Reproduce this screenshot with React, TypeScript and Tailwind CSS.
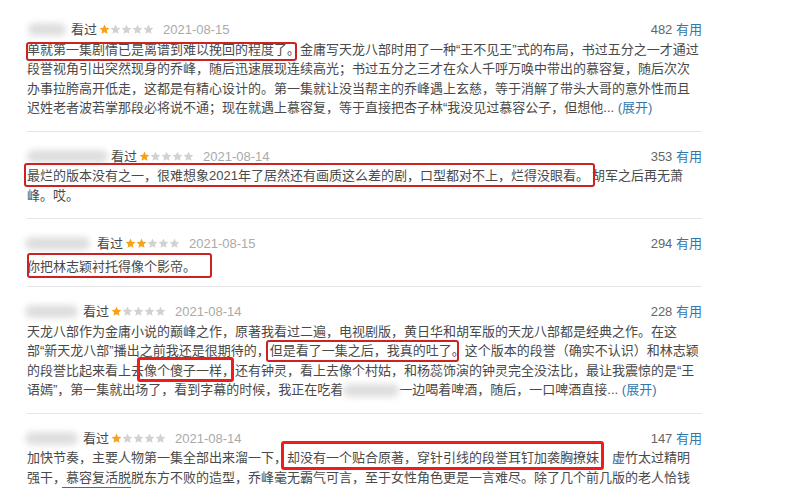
import React from "react"

type Review = {
  name: number
  rating: number
  date: string
  votes: number
  lines: React.ReactNode[]
  first?: boolean
  bodyTop?: string
  bottom?: string
}

function Star({ on }: { on: boolean }) {
  return (
    <svg width="11" height="11" viewBox="0 0 24 24" className="shrink-0">
      <path
        d="M12 1.2l3.2 6.8 7.4.9-5.5 5.1 1.5 7.4L12 17.8l-6.6 3.6 1.5-7.4-5.5-5.1 7.4-.9z"
        fill={on ? "#f5a31e" : "#d2d2d2"}
      />
    </svg>
  )
}

function Stars({ n }: { n: number }) {
  return (
    <span className="flex items-center">
      {[0, 1, 2, 3, 4].map(i => (
        <Star key={i} on={i < n} />
      ))}
    </span>
  )
}

// smudged-out user name / words
function Smudge({ w }: { w: string }) {
  return <span className={"inline-block h-[13px] rounded-full bg-[#dedede] blur-[3px] align-middle " + w} />
}

function Mark({ children, box }: { children: React.ReactNode; box: string }) {
  return (
    <span className="relative">
      {children}
      <span className={"pointer-events-none absolute rounded-[3px] " + box} />
    </span>
  )
}

const more = <span className="text-[#3377aa]"> (展开)</span>

const reviews: Review[] = [
  {
    name: 1,
    rating: 1,
    date: "2021-08-15",
    votes: 482,
    first: true,
    lines: [
      <>
        <Mark box="top-[0px] bottom-[-4px] left-[-1px] right-[3px] border-2 border-[#cc2222]">单就第一集剧情已是离谱到难以挽回的程度了。</Mark>
        金庸写天龙八部时用了一种“王不见王”式的布局，书过五分之一才通过
      </>,
      "段誉视角引出突然现身的乔峰，随后迅速展现连续高光；书过五分之三才在众人千呼万唤中带出的慕容复，随后次次",
      "办事拉胯高开低走，这都是有精心设计的。第一集就让没当帮主的乔峰遇上玄慈，等于消解了带头大哥的意外性而且",
      <>迟姓老者波若掌那段必将说不通；现在就遇上慕容复，等于直接把杏子林“我没见过慕容公子，但想他...{more}</>,
    ],
  },
  {
    name: 2,
    rating: 1,
    date: "2021-08-14",
    votes: 353,
    lines: [
      <>
        <Mark box="top-[-5px] bottom-[-4px] left-[-3px] right-[-6px] border-2 border-[#cc2222]">最烂的版本没有之一，很难想象2021年了居然还有画质这么差的剧，口型都对不上，烂得没眼看。</Mark>
        <span className="ml-[3px]">胡军之后再无萧</span>
      </>,
      "峰。哎。",
    ],
  },
  {
    name: 3,
    rating: 2,
    date: "2021-08-15",
    votes: 294,
    bodyTop: "mt-[3px]",
    bottom: "pb-[10px]",
    lines: [
      <Mark box="top-[-6px] bottom-[-4px] left-[0px] right-[-16px] border-2 border-[#cc2222]">你把林志颖衬托得像个影帝。</Mark>,
    ],
  },
  {
    name: 4,
    rating: 1,
    date: "2021-08-14",
    votes: 228,
    lines: [
      "天龙八部作为金庸小说的巅峰之作，原著我看过二遍，电视剧版，黄日华和胡军版的天龙八部都是经典之作。在这",
      <>
        部“新天龙八部”播出之前我还是很期待的，
        <Mark box="top-[-3px] bottom-[-4px] left-[-4px] right-[6px] border-2 border-[#cc2222]">但是看了一集之后，我真的吐了。</Mark>
        这个版本的段誉（确实不认识）和林志颖
      </>,
      <>
        的段誉比起来看上去
        <Mark box="top-[-6px] bottom-[-4px] left-[-7px] right-[1px] border-[3px] border-[#f01c1c]">像个傻子一样，</Mark>
        还有钟灵，看上去像个村姑，和杨蕊饰演的钟灵完全没法比，最让我震惊的是“王
      </>,
      <>
        语嫣”，第一集就出场了，看到字幕的时候，我正在吃着
        <Smudge w="w-[56px]" />
        一边喝着啤酒，随后，一口啤酒直接...{more}
      </>,
    ],
  },
  {
    name: 4,
    rating: 1,
    date: "2021-08-14",
    votes: 147,
    lines: [
      <>
        加快节奏，主要人物第一集全部出来溜一下，
        <Mark box="top-[-9px] bottom-[-5px] left-[-6px] right-[-5px] border-[3px] border-[#f01c1c]">却没有一个贴合原著，穿针引线的段誉耳钉加袭胸撩妹</Mark>
        ，虚竹太过精明
      </>,
      <>
        强干，
        <Mark box="bottom-[-4px] left-[-4px] right-[0px] h-[2px] rounded-none bg-[#ee2a2a]">慕容复活脱</Mark>
        脱东方不败的造型，乔峰毫无霸气可言，至于女性角色更是一言难尽。除了几个前几版的老人恰钱
      </>,
    ],
  },
]

const nameWidth: Record<number, string> = {
  1: "w-[38px] ml-[1px] mr-[5px]",
  2: "w-[81px] mr-[3px]",
  3: "w-[65px] ml-[-2px] mr-[7px]",
  4: "w-[53px] ml-[-2px] mr-[5px]",
}

function ReviewItem({ r }: { r: Review }) {
  return (
    <div className={(r.first ? "pt-[20px] " : "pt-[15px] ") + (r.bottom ?? "pb-[13px]") + " border-b border-[#e6e6e6]"}>
      <div className="flex items-center h-[19.5px]">
        <Smudge w={nameWidth[r.name]} />
        <span className="text-[#494949]">看过</span>
        <span className="ml-[2px]">
          <Stars n={r.rating} />
        </span>
        <span className="ml-[9px] text-[#aaaaaa]">{r.date}</span>
        <span className="ml-auto text-[#666666]">
          {r.votes} <span className="text-[#3377aa]">有用</span>
        </span>
      </div>
      <div className={r.bodyTop ?? ""}>
        {r.lines.map((ln, i) => (
          <div key={i} className="whitespace-nowrap text-[#494949]">
            {ln}
          </div>
        ))}
      </div>
    </div>
  )
}

export default function App() {
  return (
    <div className="w-[805px] h-[488px] overflow-hidden bg-white font-['Liberation_Sans','Noto_Sans_CJK_SC',sans-serif] text-[13px] leading-[19.5px]">
      <div className="ml-[27px] w-[675px]">
        {reviews.map((r, i) => (
          <ReviewItem key={i} r={r} />
        ))}
      </div>
    </div>
  )
}
